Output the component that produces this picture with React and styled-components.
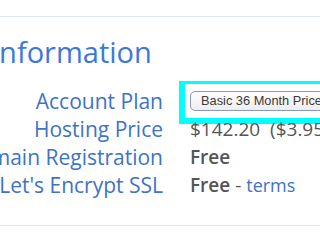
import React from "react";
import styled, { createGlobalStyle } from "styled-components";

const GlobalStyle = createGlobalStyle`
  html, body {
    margin: 0;
    padding: 0;
    background: #ffffff;
    overflow: hidden;
  }
  body {
    font-family: "Open Sans", "Liberation Sans", sans-serif;
  }
`;

const Panel = styled.section`
  width: 320px;
  height: 241px;
  overflow: hidden;
  padding-top: 16px;
  box-sizing: border-box;
`;

const Card = styled.div`
  border-top: 1px solid #dce8f8;
  border-bottom: 1px solid #dde6f0;
  padding: 17px 0 26px;
`;

const Title = styled.h2`
  margin: 0 0 17px -9px;
  font-size: 29px;
  font-weight: 400;
  line-height: 36px;
  color: #3c78d8;
  white-space: nowrap;
`;

const Details = styled.div`
  display: grid;
  grid-template-columns: 180px 1fr;
  grid-auto-rows: 28px;
  column-gap: 27px;
  margin-left: -17px;
`;

const Label = styled.div`
  font-size: 21px;
  line-height: 28px;
  color: #3e73c6;
  text-align: right;
  white-space: nowrap;
  direction: rtl;
`;

const Value = styled.div`
  font-size: 19px;
  line-height: 28px;
  color: #555555;
  white-space: nowrap;
`;

const Strong = styled.span`
  font-weight: 600;
  color: #555555;
`;

const Link = styled.a`
  color: #3e73c6;
  text-decoration: none;
  font-size: 18px;
`;

const Highlight = styled.div`
  margin: -6px 0 -3px -11px;
  border: solid #00ffff;
  border-width: 3px 0 6px 6px;
  background: #ffffff;
  height: 27px;
  padding: 7px 0 0 5px;
  box-sizing: content-box;
  width: 200px;
  line-height: 0;
`;

const Select = styled.span`
  display: inline-block;
  font-family: "Liberation Sans", Arial, sans-serif;
  font-size: 12.8px;
  line-height: 18px;
  color: #3a3a3a;
  padding: 0 14px 0 10px;
  border: 1px solid #8799b6;
  border-radius: 5px;
  background: linear-gradient(#fdfdfd, #eeeeee);
  white-space: nowrap;
`;

const rows = [
  { label: "Account Plan", value: "plan" },
  { label: "Hosting Price", value: "price" },
  { label: "Domain Registration", value: "domain" },
  { label: "Let's Encrypt SSL", value: "ssl" },
];

const renderValue = (kind) => {
  if (kind === "plan") {
    return (
      <Highlight>
        <Select>Basic 36 Month Price ▾</Select>
      </Highlight>
    );
  }
  if (kind === "price") return <>$142.20&nbsp;&nbsp;($3.95/mo)</>;
  if (kind === "domain") return <Strong>Free</Strong>;
  return (
    <>
      <Strong>Free</Strong> - <Link href="#">terms</Link>
    </>
  );
};

export default function App() {
  return (
    <Panel>
      <GlobalStyle />
      <Card>
        <Title>Information</Title>
        <Details>
          {rows.map((row) => (
            <React.Fragment key={row.label}>
              <Label>
                <bdi>{row.label}</bdi>
              </Label>
              <Value>{renderValue(row.value)}</Value>
            </React.Fragment>
          ))}
        </Details>
      </Card>
    </Panel>
  );
}
